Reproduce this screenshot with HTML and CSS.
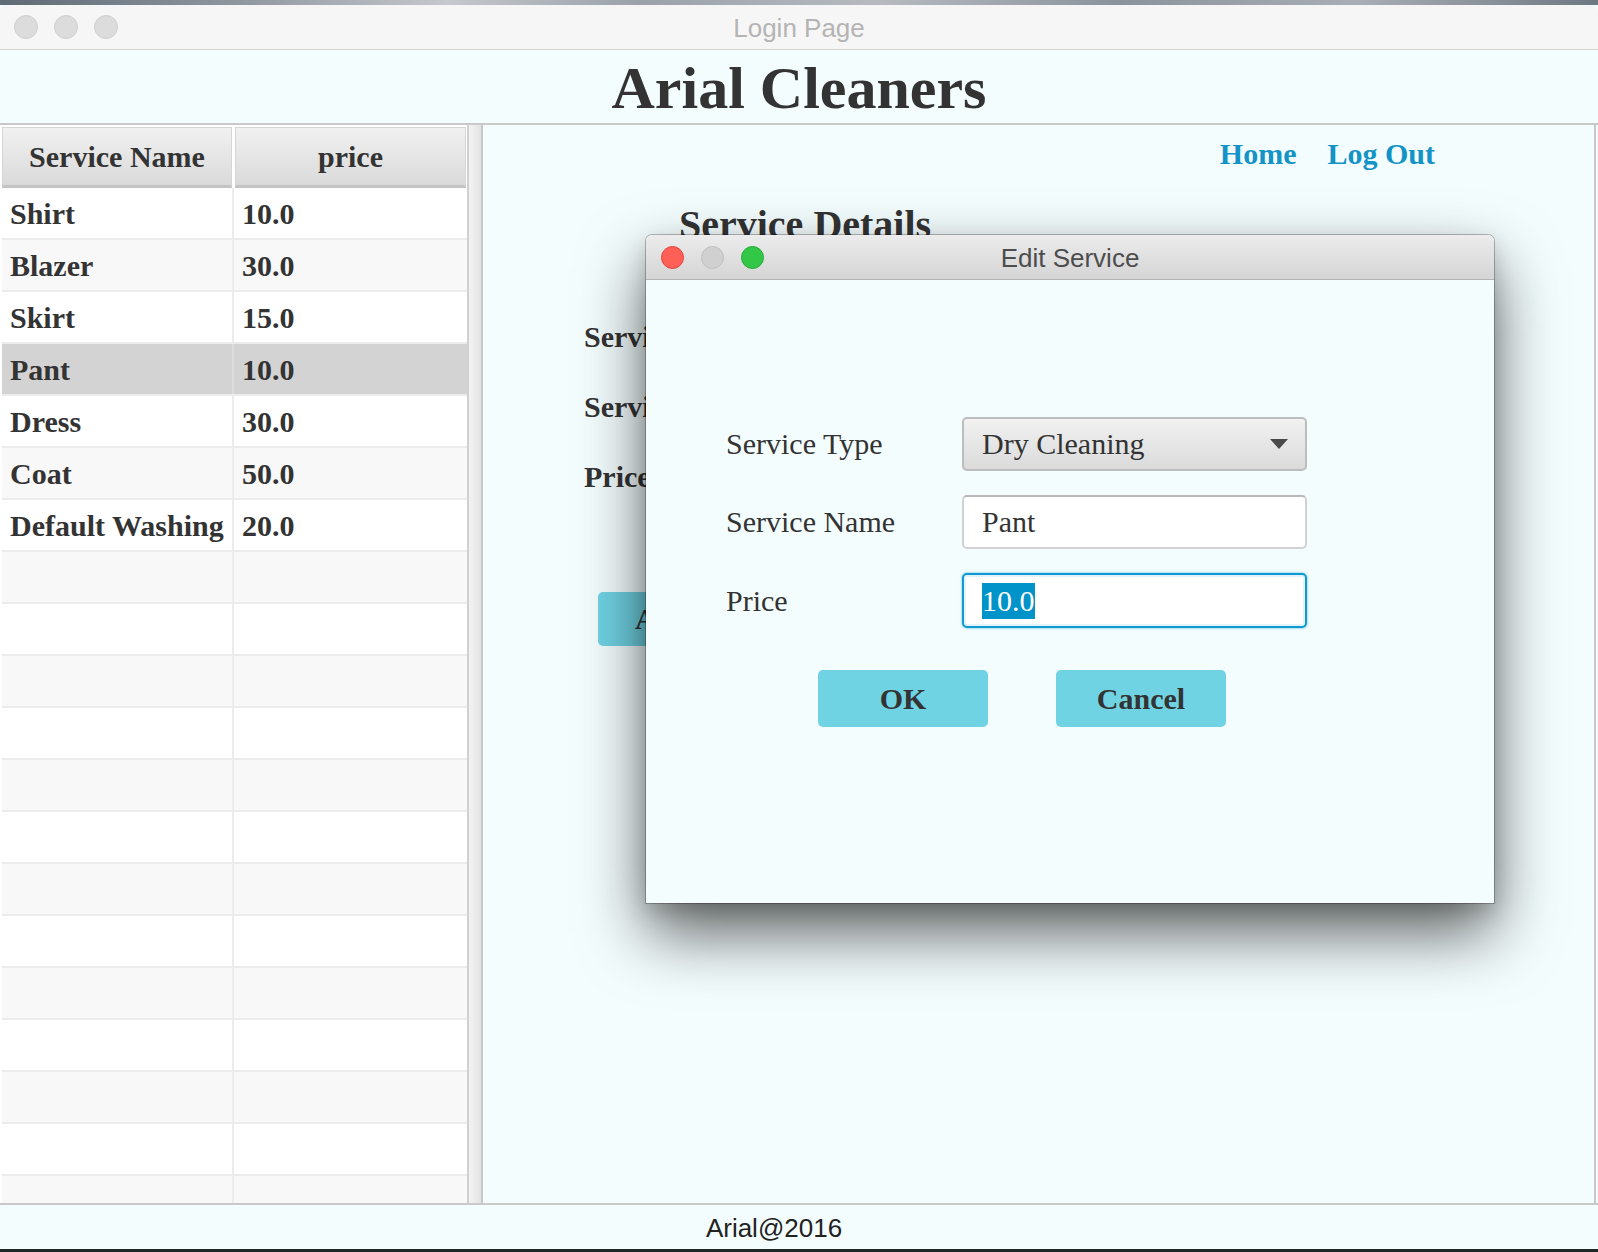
FILE: index.html
```html
<!DOCTYPE html>
<html lang="en">
<head>
<meta charset="utf-8">
<title>Login Page</title>
<link rel="stylesheet" href="styles.css">
</head>
<body>
<div class="desk"></div>
<div class="window">
  <div class="titlebar">
    <div class="lights">
      <span class="light"></span><span class="light"></span><span class="light"></span>
    </div>
    <div class="wtitle">Login Page</div>
    <div></div>
  </div>
  <header class="app-header"><h1>Arial Cleaners</h1></header>
  <main class="main">
    <section class="table-pane">
      <div class="thead">
        <div class="th">Service Name</div>
        <div class="th">price</div>
      </div>
      <div class="tbody">
        <div class="tr"><div class="td">Shirt</div><div class="td">10.0</div></div>
        <div class="tr"><div class="td">Blazer</div><div class="td">30.0</div></div>
        <div class="tr"><div class="td">Skirt</div><div class="td">15.0</div></div>
        <div class="tr selected"><div class="td">Pant</div><div class="td">10.0</div></div>
        <div class="tr"><div class="td">Dress</div><div class="td">30.0</div></div>
        <div class="tr"><div class="td">Coat</div><div class="td">50.0</div></div>
        <div class="tr"><div class="td">Default Washing</div><div class="td">20.0</div></div>
        <div class="tr"><div class="td"></div><div class="td"></div></div>
        <div class="tr"><div class="td"></div><div class="td"></div></div>
        <div class="tr"><div class="td"></div><div class="td"></div></div>
        <div class="tr"><div class="td"></div><div class="td"></div></div>
        <div class="tr"><div class="td"></div><div class="td"></div></div>
        <div class="tr"><div class="td"></div><div class="td"></div></div>
        <div class="tr"><div class="td"></div><div class="td"></div></div>
        <div class="tr"><div class="td"></div><div class="td"></div></div>
        <div class="tr"><div class="td"></div><div class="td"></div></div>
        <div class="tr"><div class="td"></div><div class="td"></div></div>
        <div class="tr"><div class="td"></div><div class="td"></div></div>
        <div class="tr"><div class="td"></div><div class="td"></div></div>
        <div class="tr"><div class="td"></div><div class="td"></div></div>
        <div class="tr"><div class="td"></div><div class="td"></div></div>
      </div>
    </section>
    <div class="divider"></div>
    <section class="detail-pane">
      <nav class="nav"><a class="link">Home</a><a class="link">Log Out</a></nav>
      <h2 class="details-title">Service Details</h2>
      <div class="fields">
        <div class="flabel">Service Type</div>
        <div class="flabel">Service Name</div>
        <div class="flabel">Price</div>
      </div>
      <button class="add-btn">Add</button>
    </section>
  </main>
  <footer class="footer">Arial@2016</footer>
</div>
<div class="desk-bottom"></div>

<div class="dialog">
  <div class="dlg-title">
    <div class="lights dlg-lights">
      <span class="light red"></span><span class="light grey"></span><span class="light green"></span>
    </div>
    <div class="dtitle">Edit Service</div>
    <div></div>
  </div>
  <div class="dlg-body">
    <div class="form">
      <div class="label">Service Type</div>
      <div class="combo"><span>Dry Cleaning</span><span class="arrow"></span></div>
      <div class="label">Service Name</div>
      <div class="field"><span>Pant</span></div>
      <div class="label">Price</div>
      <div class="field focus"><span class="sel">10.0</span></div>
    </div>
    <div class="actions">
      <button class="btn">OK</button>
      <button class="btn">Cancel</button>
    </div>
  </div>
</div>
</body>
</html>
```

FILE: styles.css
```css
* { box-sizing: border-box; }

html, body {
  margin: 0;
  padding: 0;
}

body {
  width: 1598px;
  height: 1252px;
  overflow: hidden;
  position: relative;
  background: #f4fdfe;
  font-family: "Liberation Serif", "Times New Roman", serif;
  color: #333;
}

.desk {
  height: 5px;
  background: linear-gradient(90deg, #5f6a75 0%, #8f979f 15%, #c5c8cc 28%, #9aa1a8 40%, #b7bbc0 55%, #8a939c 70%, #a9aeb4 85%, #6e7883 100%);
}

.window {
  display: flex;
  flex-direction: column;
  height: 1244px;
}

.titlebar {
  height: 45px;
  background: #f6f6f6;
  border-bottom: 1px solid #d3d3d3;
  border-radius: 6px 6px 0 0;
  display: grid;
  grid-template-columns: 1fr auto 1fr;
  align-items: center;
}

.lights {
  display: flex;
  gap: 16px;
  padding-left: 14px;
}

.light {
  width: 24px;
  height: 24px;
  border-radius: 50%;
  background: #dcdcdc;
  border: 1px solid #cfcfcf;
}

.wtitle {
  font-family: "Liberation Sans", Arial, sans-serif;
  font-size: 26px;
  color: #b4b4b4;
  padding-top: 3px;
}

.app-header {
  height: 75px;
  border-bottom: 2px solid #c9c9c9;
  background: #f4fdfe;
  text-align: center;
  padding-top: 4px;
}

.app-header h1 {
  margin: 0;
  font-size: 60px;
  line-height: 69px;
  font-weight: bold;
  color: #333;
}

.main {
  display: flex;
  height: 1080px;
  border-bottom: 2px solid #c9c9c9;
  padding-right: 2px;
}

.table-pane {
  width: 467px;
  padding: 2px 0 0 2px;
  overflow: hidden;
  background: #fff;
}

.thead {
  display: grid;
  grid-template-columns: 230px 231px;
  gap: 3px;
  height: 61px;
}

.th {
  background: linear-gradient(#f1f1f1, #dadada);
  border: 1px solid #d6d6d6;
  border-bottom: 3px solid #c4c4c4;
  text-align: center;
  font-weight: bold;
  font-size: 30px;
  line-height: 55px;
  padding-top: 1px;
}

.tr {
  display: grid;
  grid-template-columns: 232px 233px;
  height: 52px;
  border-bottom: 2px solid #ececec;
  background: #fff;
}

.tr:nth-child(even) {
  background: #f8f8f8;
}

.tr.selected {
  background: #d3d3d3;
}

.td {
  font-weight: bold;
  font-size: 30px;
  line-height: 49px;
  padding: 1px 0 0 8px;
  white-space: nowrap;
}

.td:first-child {
  border-right: 2px solid #ececec;
}

.tr.selected .td:first-child {
  border-right-color: #dcdcdc;
}

.divider {
  width: 16px;
  background: linear-gradient(90deg, #f3f3f3, #e3e3e3);
  border-left: 2px solid #d0d0d0;
  border-right: 2px solid #c8c8c8;
}

.detail-pane {
  flex: 1;
  display: flex;
  flex-direction: column;
  align-items: flex-start;
  padding: 12px 159px 0 0;
  background: #f4fdfe;
  border-right: 2px solid #c8c8c8;
}

.nav {
  align-self: stretch;
  display: flex;
  justify-content: flex-end;
  gap: 31px;
}

.link {
  font-size: 30px;
  font-weight: bold;
  line-height: 34px;
  color: #1393c6;
  text-decoration: none;
}

.details-title {
  margin: 31px 0 0 196px;
  font-size: 40px;
  line-height: 46px;
  font-weight: bold;
  color: #333;
}

.fields {
  margin: 72px 0 0 101px;
  display: flex;
  flex-direction: column;
  gap: 36px;
}

.flabel {
  font-size: 30px;
  font-weight: bold;
  line-height: 34px;
}

.add-btn {
  margin: 98px 0 0 115px;
  height: 54px;
  padding: 0 37px;
  border: none;
  border-radius: 5px;
  background: #70d3e4;
  font-family: "Liberation Serif", "Times New Roman", serif;
  font-size: 30px;
  font-weight: bold;
  color: #333;
}

.footer {
  height: 44px;
  background: #f4fdfe;
  text-align: center;
  padding: 1px 50px 0 0;
  font-family: "Liberation Sans", Arial, sans-serif;
  font-size: 26px;
  line-height: 44px;
  color: #222;
}

.desk-bottom {
  height: 3px;
  background: #1f2826;
}

/* Dialog window */
.dialog {
  position: absolute;
  left: 646px;
  top: 235px;
  width: 848px;
  height: 668px;
  display: flex;
  flex-direction: column;
  border-radius: 6px 6px 0 0;
  box-shadow: 0 0 0 1px rgba(0, 0, 0, 0.25), 0 30px 65px rgba(0, 0, 0, 0.62), 0 8px 20px rgba(0, 0, 0, 0.15);
}

.dlg-title {
  height: 45px;
  background: linear-gradient(#ececec, #d5d5d5);
  border-bottom: 1px solid #b4b4b4;
  border-radius: 6px 6px 0 0;
  display: grid;
  grid-template-columns: 1fr auto 1fr;
  align-items: center;
}

.dlg-lights {
  gap: 17px;
  padding-left: 15px;
}

.dlg-lights .light {
  width: 23px;
  height: 23px;
}

.light.red { background: #fe5f57; border-color: #e2463f; }
.light.grey { background: #d0d0d0; border-color: #c0c0c0; }
.light.green { background: #33c748; border-color: #27aa35; }

.dtitle {
  font-family: "Liberation Sans", Arial, sans-serif;
  font-size: 26px;
  color: #4d4d4d;
  padding-top: 2px;
}

.dlg-body {
  flex: 1;
  background: #f4fdfe;
  padding-top: 137px;
}

.form {
  display: grid;
  grid-template-columns: 236px 345px;
  row-gap: 24px;
  padding-left: 80px;
  align-items: center;
}

.label {
  font-size: 30px;
  line-height: 54px;
  color: #333;
}

.combo {
  height: 54px;
  border: 2px solid #bdbdbd;
  border-radius: 5px;
  background: linear-gradient(#f1f1f1, #dbdbdb);
  display: flex;
  align-items: center;
  justify-content: space-between;
  padding: 0 17px 0 18px;
  font-size: 30px;
  color: #333;
}

.arrow {
  width: 0;
  height: 0;
  border-left: 9px solid transparent;
  border-right: 9px solid transparent;
  border-top: 10px solid #4a4a4a;
}

.field {
  height: 54px;
  background: #fff;
  border: 2px solid #d2d2d2;
  border-top-color: #b9b9b9;
  border-radius: 5px;
  display: flex;
  align-items: center;
  padding-left: 18px;
  font-size: 30px;
  color: #333;
}

.field.focus {
  height: 55px;
  border: 2px solid #1199d1;
  box-shadow: 0 0 2px 1px rgba(17, 153, 209, 0.3), inset 0 0 0 2px #e2f4fa;
}

.sel {
  background: #0093c9;
  color: #fff;
  line-height: 36px;
  display: inline-block;
}

.actions {
  display: flex;
  gap: 68px;
  padding-left: 172px;
  margin-top: 42px;
}

.btn {
  width: 170px;
  height: 57px;
  border: none;
  border-radius: 5px;
  background: #70d3e4;
  font-family: "Liberation Serif", "Times New Roman", serif;
  font-size: 30px;
  font-weight: bold;
  color: #333;
}
```
